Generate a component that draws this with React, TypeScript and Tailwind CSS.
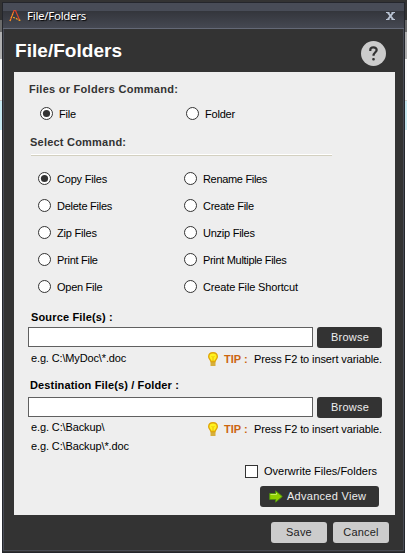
import { useState } from "react";
import clsx from "clsx";

const COMMANDS = [
  { label: "Copy Files", track: "tracking-[-0.2px]" },
  { label: "Rename Files", track: "tracking-[-0.32px]" },
  { label: "Delete Files", track: "tracking-[-0.25px]" },
  { label: "Create File", track: "tracking-[-0.27px]" },
  { label: "Zip Files", track: "tracking-[-0.2px]" },
  { label: "Unzip Files", track: "tracking-[-0.25px]" },
  { label: "Print File", track: "tracking-[-0.27px]" },
  { label: "Print Multiple Files", track: "tracking-[-0.32px]" },
  { label: "Open File", track: "tracking-[-0.27px]" },
  { label: "Create File Shortcut", track: "tracking-[-0.15px]" },
];

type RadioProps = {
  label: string;
  track?: string;
  checked: boolean;
  onSelect: () => void;
};

function Radio({ label, track, checked, onSelect }: RadioProps) {
  return (
    <button
      type="button"
      role="radio"
      aria-checked={checked}
      onClick={onSelect}
      className="flex h-[27px] items-center gap-[6px] text-left"
    >
      <svg width="13" height="13" viewBox="0 0 13 13" className="shrink-0">
        <circle cx="6.5" cy="6.5" r="6" fill="#fff" stroke="#333" />
        {checked && <circle cx="6.5" cy="6.5" r="3.6" fill="#333" />}
      </svg>
      <span className={clsx("whitespace-nowrap pt-px", track)}>{label}</span>
    </button>
  );
}

function Bulb() {
  return (
    <svg width="10" height="14" viewBox="0 0 10 14" className="shrink-0">
      <path
        d="M5 .7C2.400.7.7 2.400.7 4.700c0 1.900 1.700 2.500 2.300 4.800h4c.6-2.300 2.300-2.900 2.300-4.800C9.300 2.400 7.600.7 5 .7Z"
        fill="#fff31f"
        stroke="#dfa50b"
        strokeWidth="1.400"
      />
      <path d="M3.500 4 5 5.500 6.500 4M5 5.500v4" fill="none" stroke="#e8b90c" strokeWidth=".9" />
      <path d="M2.500 11h5M2.500 13h5" stroke="#cf9a00" strokeWidth="1.400" />
    </svg>
  );
}

function Tip() {
  return (
    <div className="flex h-[18px] items-center">
      <Bulb />
      <span className="ml-[6px] w-[30px] whitespace-nowrap font-bold text-[#cc6510]">TIP :</span>
      <span className="whitespace-nowrap tracking-[-0.1px]">Press F2 to insert variable.</span>
    </div>
  );
}

function PathField() {
  return (
    <div className="flex h-[21px] gap-[4px]">
      <input className="h-[20px] w-[285px] border border-[#606060] bg-white px-1 outline-none" />
      <button className="h-[21px] w-[65px] rounded-[3px] bg-[#333] pl-px tracking-[0.25px] text-[#eee]">
        Browse
      </button>
    </div>
  );
}

export default function App() {
  const [kind, setKind] = useState("File");
  const [command, setCommand] = useState("Copy Files");

  return (
    <div className="relative h-[556px] w-[407px] overflow-hidden bg-white font-['Liberation_Sans',Arial,sans-serif] text-[11px] leading-[13px] text-black">
      {/* window behind the dialog */}
      <div className="flex h-full flex-col">
        <div className="h-[20px] bg-[#333]" />
        <div className="h-[12px] bg-[#6b6b6b]" />
        <div className="h-[27px] bg-[#b0b0b0]" />
        <div className="h-[42px] border-b border-[#ccc] bg-[#f7f7f7]" />
        <div className="h-[29px] bg-[#c9eaf2]" />
      </div>

      <div className="absolute left-[2px] top-[2px] flex h-[551px] w-[403px] flex-col border border-[#24262c] bg-[#333]">
        <div className="flex h-[26px] shrink-0 items-center border-b border-[#646977] bg-linear-to-b from-[#484c57] from-30% via-[#33353b] via-30% to-[#454852] pl-[6px] pr-[9px]">
          <svg width="13" height="14" viewBox="0 0 13 14" className="shrink-0">
            <path d="M1 12 5 1.500h1.500L10.500 11" fill="none" stroke="#d9422b" strokeWidth="1.200" />
            <path d="M1 12 4.500 3M4 8.500c3 0 5 3 8 3" fill="none" stroke="#ef9b24" strokeWidth="1.200" strokeDasharray="2 1" />
          </svg>
          <span className="ml-[5px] font-['Noto_Sans',sans-serif] text-[11.5px] tracking-[-0.28px] text-white [text-shadow:1px_1px_1px_#000]">
            File/Folders
          </span>
          <svg width="9" height="8" viewBox="0 0 9 8" className="ml-auto">
            <path d="M0 .5h3.500M5.500.5H9M0 7.500h3.500M5.500 7.500H9" stroke="#b9c3d3" />
            <path d="M1.800.5 7.200 7.500M7.200.5 1.800 7.500" stroke="#b9c3d3" strokeWidth="1.900" />
          </svg>
        </div>

        <div className="mb-px flex min-h-0 flex-1 flex-col border-x border-b border-[#484b54] pl-[10px] pr-[7px]">
          <div className="flex h-[43px] shrink-0 items-center justify-between pl-px pr-[10px]">
            <h1 className="text-[19px] font-bold leading-[22px] tracking-[0.04px] text-white">File/Folders</h1>
            <div className="mt-[5px] flex size-[25px] items-center justify-center rounded-full bg-[#ccc]">
              <svg width="9" height="15" viewBox="0 0 9 15">
                <path d="M1.300 5V3.800C1.300 2.200 2.600 1.300 4.500 1.300s3.200 1 3.200 2.700c0 2.200-3.200 2.500-3.200 5.700" fill="none" stroke="#333" strokeWidth="2.200" />
                <rect x="3.200" y="12" width="2.600" height="2.600" rx="1" fill="#333" />
              </svg>
            </div>
          </div>

          <main className="flex h-[443px] w-[381px] shrink-0 flex-col bg-[#eee] pl-[14px]">
            <h2 className="mt-[11px] h-[13px] pl-px font-bold tracking-[0.27px] text-[#333]">Files or Folders Command:</h2>
            <div className="mt-[4px] grid grid-cols-[146px_1fr] pl-[12px]">
              {["File", "Folder"].map((name) => (
                <Radio
                  key={name}
                  label={name}
                  track="tracking-[-0.2px]"
                  checked={kind === name}
                  onSelect={() => setKind(name)}
                />
              ))}
            </div>
            <h2 className="mt-[9px] h-[13px] pl-[2px] font-bold tracking-[0.22px] text-[#333]">Select Command:</h2>
            <div className="ml-[3px] mt-[5px] h-[2px] w-[301px] border-b border-[#d3d0c0] bg-white" />
            <div className="mt-[9px] grid grid-cols-[146px_1fr] pl-[10px]">
              {COMMANDS.map((c) => (
                <Radio
                  key={c.label}
                  label={c.label}
                  track={c.track}
                  checked={command === c.label}
                  onSelect={() => setCommand(c.label)}
                />
              ))}
            </div>

            <h2 className="mt-[11px] h-[16px] pl-[3px] font-bold tracking-[0.15px]">Source File(s) :</h2>
            <PathField />
            <div className="mt-[2px] flex h-[18px] justify-between pl-[3px] pr-[13px]">
              <span className="pt-[2px] tracking-[-0.14px]">e.g. C:\MyDoc\*.doc</span>
              <Tip />
            </div>

            <h2 className="mt-[11px] h-[18px] pl-[2px] font-bold tracking-[0.14px]">Destination File(s) / Folder :</h2>
            <PathField />
            <div className="mt-[2px] flex h-[18px] justify-between pl-[3px] pr-[13px]">
              <span className="pt-px tracking-[-0.12px]">e.g. C:\Backup\</span>
              <Tip />
            </div>
            <div className="pl-[3px] pt-[2px] tracking-[-0.12px]">e.g. C:\Backup\*.doc</div>

            <label className="ml-[217px] mt-[12px] flex h-[13px] items-center gap-[6px]">
              <input type="checkbox" className="size-[13px] appearance-none border border-[#333] bg-white" />
              <span className="whitespace-nowrap">Overwrite Files/Folders</span>
            </label>
            <button className="ml-[232px] mt-[8px] flex h-[21px] w-[119px] items-center gap-[4px] rounded-[3px] bg-[#333] pl-[9px] tracking-[0.28px] text-[#eee]">
              <svg width="14" height="13" viewBox="0 0 14 13" className="shrink-0">
                <path d="M.7 3.500h6V.8l6.600 5.700-6.600 5.700V9.500h-6Z" fill="#8fd000" stroke="#4f8f10" />
                <path d="M1.500 4.500h6V3" fill="none" stroke="#c5ef5c" />
              </svg>
              <span className="whitespace-nowrap">Advanced View</span>
            </button>
          </main>

          <footer className="mt-[7px] flex justify-end gap-[6px] pr-[7px]">
            {["Save", "Cancel"].map((name) => (
              <button key={name} className="h-[21px] w-[56px] rounded-[3px] bg-[#ccc] tracking-[0.2px] text-[#222]">
                {name}
              </button>
            ))}
          </footer>
        </div>
      </div>
    </div>
  );
}
